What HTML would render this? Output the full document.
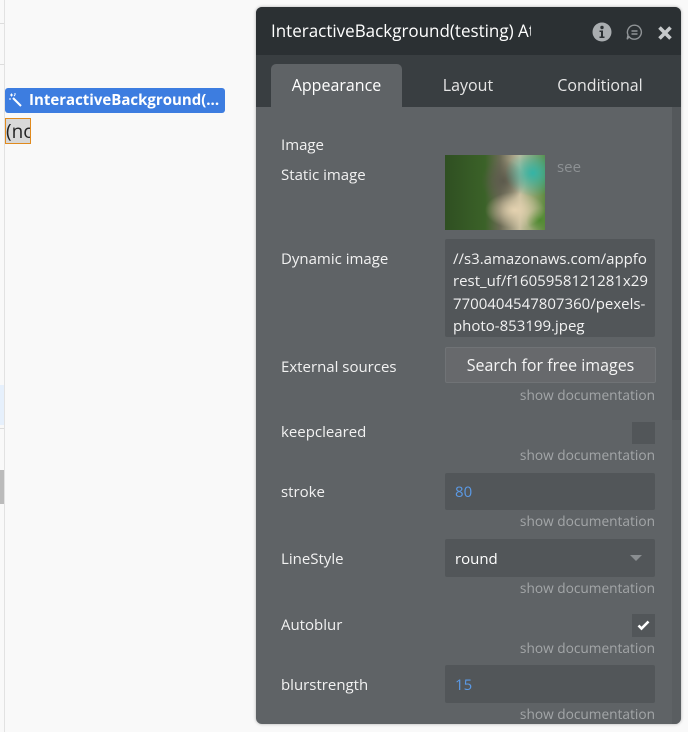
<!DOCTYPE html>
<html><head><meta charset="utf-8"><style>
*{margin:0;padding:0;box-sizing:border-box}
body{width:688px;height:732px;background:#f9f9f9;position:relative;overflow:hidden;font-family:"Open Sans","Liberation Sans",sans-serif}
.a{position:absolute}
.lbl{position:absolute;left:281px;color:#f2f2f2;font-size:15px;line-height:20px}
.doc{position:absolute;right:33px;color:#a3a6a8;font-size:13.7px;line-height:18px}
.inp{position:absolute;left:445px;width:210px;background:#525659;border-radius:2px}
.val{position:absolute;left:10px;font-size:15px;color:#5b9ae6}
</style></head><body>
<div class="a" style="left:4px;top:0;width:1px;height:732px;background:#e2e2e2"></div>
<div class="a" style="left:0;top:23px;width:4px;height:1px;background:#ddd"></div>
<div class="a" style="left:0;top:64px;width:4px;height:1px;background:#ddd"></div>
<div class="a" style="left:0;top:385px;width:4px;height:40px;background:#e6f0fc"></div>
<div class="a" style="left:0;top:428px;width:4px;height:1px;background:#ddd"></div>
<div class="a" style="left:0;top:470px;width:4px;height:34px;background:#bbb"></div>

<div class="a" style="left:5px;top:88px;width:220px;height:25px;background:#3d7de0;border-radius:3px;color:#fff;font-size:15px;font-weight:bold;line-height:25px;padding-left:24px;white-space:nowrap">InteractiveBackground(...</div>
<svg class="a" style="left:8px;top:92px" width="16" height="16" viewBox="0 0 16 16"><path d="M5 6 L13 14" stroke="#fff" stroke-width="2"/><path d="M2 3h3M3.5 1.5v3M7 1v2M1 7h2M6 4l1-1" stroke="#fff" stroke-width="1"/></svg>
<div class="a" style="left:5px;top:118px;width:26px;height:26px;background:#d8d8d8;border:1px solid #e08a1e;overflow:hidden;font-size:19px;line-height:24px;color:#222">(no</div>

<div class="a" style="left:256px;top:7px;width:425px;height:717px;background:#5f6366;border-radius:6px;overflow:hidden;box-shadow:0 0 3px rgba(0,0,0,.3)">
 <div class="a" style="left:0;top:0;width:425px;height:48px;background:#2b3033"></div>
 <div class="a" style="left:15px;top:12px;width:260px;height:24px;overflow:hidden;white-space:nowrap;color:#fff;font-size:17px;line-height:24px">InteractiveBackground(testing) Attributes</div>
 <div class="a" style="left:0;top:48px;width:425px;height:52px;background:#393e41"></div>
 <div class="a" style="left:15px;top:57px;width:131px;height:43px;background:#5f6366;border-radius:5px 5px 0 0"></div>
 <div class="a" style="left:15px;top:57px;width:131px;height:43px;color:#fff;font-size:16px;line-height:43px;text-align:center">Appearance</div>
 <div class="a" style="left:162px;top:57px;width:100px;height:43px;color:#e6e6e6;font-size:16px;line-height:43px;text-align:center">Layout</div>
 <div class="a" style="left:284px;top:57px;width:120px;height:43px;color:#e6e6e6;font-size:16px;line-height:43px;text-align:center">Conditional</div>
 <div class="a" style="left:416px;top:100px;width:9px;height:617px;background:#5a5e61"></div>
 <div class="a" style="left:416px;top:100px;width:9px;height:313px;background:#54585b"></div>
</div>
<svg class="a" style="left:592px;top:22px" width="20" height="20" viewBox="0 0 20 20"><circle cx="10" cy="10" r="9.5" fill="#a9adb0"/><circle cx="10" cy="5.5" r="1.7" fill="#2b3033"/><path d="M7.5 8.5h3.5v6h1.5v1.5h-5v-1.5h1.5v-4.5h-1.5z" fill="#2b3033"/></svg>
<svg class="a" style="left:626px;top:24px" width="17" height="17" viewBox="0 0 17 17"><path d="M8.5 1.2a7 7 0 1 1 -5.5 11.5 l-1.8 2.5 0.8-4.2a7 7 0 0 1 6.5-9.8z" fill="none" stroke="#8f9396" stroke-width="1.4"/><path d="M5.5 7h6M5.5 10h6" stroke="#8f9396" stroke-width="1.4"/></svg>
<svg class="a" style="left:657px;top:25px" width="16" height="16" viewBox="0 0 16 16"><path d="M2.5 2.5L13.5 13.5M13.5 2.5L2.5 13.5" stroke="#c6c9cb" stroke-width="3.6"/></svg>

<div class="lbl" style="top:135px">Image</div>
<div class="lbl" style="top:165px">Static image</div>
<div class="a" style="left:445px;top:155px;width:100px;height:75px;background:
radial-gradient(ellipse 30px 18px at 70px 55px,#e4d2b0,transparent),
radial-gradient(ellipse 28px 24px at 88px 18px,#34b4a6,transparent),
radial-gradient(ellipse 22px 22px at 58px 26px,#5c5a4c,transparent),
radial-gradient(ellipse 14px 12px at 95px 65px,#4f8a30,transparent),
linear-gradient(90deg,#2f4f22 0,#3b6228 40%,#6b6a55 55%,#c9bfa0 75%,#5f8a40 100%)"></div>
<div class="a" style="left:557px;top:157px;color:#8d9194;font-size:15px">see</div>

<div class="lbl" style="top:249px">Dynamic image</div>
<div class="inp" style="top:239px;height:98px"></div>
<div class="a" style="left:453px;top:248px;width:200px;color:#f2f2f2;font-size:15px;line-height:22.3px;word-break:break-all">//s3.amazonaws.com/appfo rest_uf/f1605958121281x29 7700404547807360/pexels-photo-853199.jpeg</div>

<div class="lbl" style="top:357px">External sources</div>
<div class="a" style="left:445px;top:347px;width:211px;height:36px;background:#67696c;border:1px solid #707376;border-radius:2px;color:#f5f5f5;font-size:16px;line-height:34px;text-align:center">Search for free images</div>
<div class="doc" style="top:387px">show documentation</div>

<div class="lbl" style="top:422px">keepcleared</div>
<div class="a" style="left:632px;top:422px;width:23px;height:22px;background:#525659"></div>
<div class="doc" style="top:447px">show documentation</div>

<div class="lbl" style="top:482px">stroke</div>
<div class="inp" style="top:473px;height:37px"><div class="val" style="top:9px">80</div></div>
<div class="doc" style="top:513px">show documentation</div>

<div class="lbl" style="top:549px">LineStyle</div>
<div class="inp" style="top:539px;height:38px"><div class="val" style="top:10px;color:#fff">round</div><div class="a" style="left:185px;top:16px;width:0;height:0;border-left:6px solid transparent;border-right:6px solid transparent;border-top:6px solid #8a8e91"></div></div>
<div class="doc" style="top:580px">show documentation</div>

<div class="lbl" style="top:615px">Autoblur</div>
<div class="a" style="left:632px;top:614px;width:23px;height:23px;background:#525659"></div>
<svg class="a" style="left:636px;top:618px" width="15" height="15" viewBox="0 0 15 15"><path d="M2.5 7.5l3 3 7-7" stroke="#fff" stroke-width="2.6" fill="none"/></svg>
<div class="doc" style="top:640px">show documentation</div>

<div class="lbl" style="top:675px">blurstrength</div>
<div class="inp" style="top:665px;height:38px"><div class="val" style="top:10px">15</div></div>
<div class="doc" style="top:706px">show documentation</div>
</body></html>
